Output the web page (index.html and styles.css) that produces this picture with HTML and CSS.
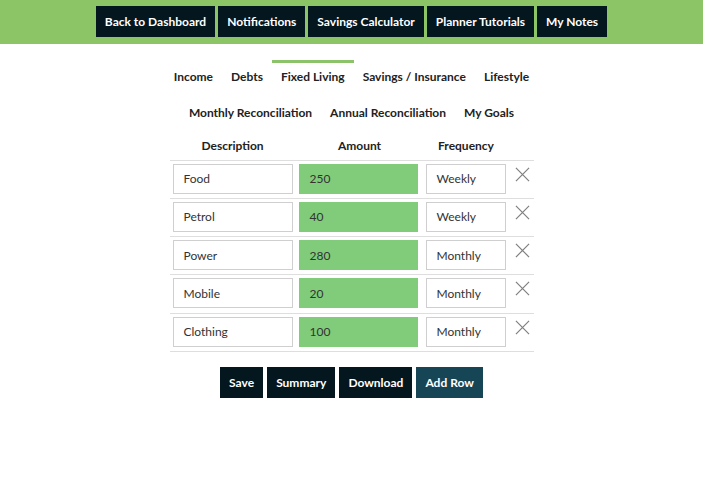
FILE: index.html
```html
<!DOCTYPE html>
<html>
<head>
<meta charset="utf-8">
<link rel="stylesheet" href="styles.css">
</head>
<body>
<header class="topbar">
  <nav class="topnav">
    <a class="btn">Back to Dashboard</a>
    <a class="btn">Notifications</a>
    <a class="btn">Savings Calculator</a>
    <a class="btn">Planner Tutorials</a>
    <a class="btn">My Notes</a>
  </nav>
</header>
<main class="content">
  <ul class="tabs">
    <li class="tab">Income</li>
    <li class="tab">Debts</li>
    <li class="tab active">Fixed Living</li>
    <li class="tab">Savings / Insurance</li>
    <li class="tab">Lifestyle</li>
  </ul>
  <ul class="tabs">
    <li class="tab">Monthly Reconciliation</li>
    <li class="tab">Annual Reconciliation</li>
    <li class="tab">My Goals</li>
  </ul>
  <table class="grid">
    <thead>
      <tr>
        <th class="c-desc">Description</th>
        <th class="c-amt">Amount</th>
        <th class="c-freq">Frequency</th>
        <th class="c-del"></th>
      </tr>
    </thead>
    <tbody>
      <tr>
        <td class="c-desc"><div class="field">Food</div></td>
        <td class="c-amt"><div class="field amount">250</div></td>
        <td class="c-freq"><div class="field">Weekly</div></td>
        <td class="c-del"><svg class="x" viewBox="0 0 16 16"><path d="M1 1L15 15M15 1L1 15"/></svg></td>
      </tr>
      <tr>
        <td class="c-desc"><div class="field">Petrol</div></td>
        <td class="c-amt"><div class="field amount">40</div></td>
        <td class="c-freq"><div class="field">Weekly</div></td>
        <td class="c-del"><svg class="x" viewBox="0 0 16 16"><path d="M1 1L15 15M15 1L1 15"/></svg></td>
      </tr>
      <tr>
        <td class="c-desc"><div class="field">Power</div></td>
        <td class="c-amt"><div class="field amount">280</div></td>
        <td class="c-freq"><div class="field">Monthly</div></td>
        <td class="c-del"><svg class="x" viewBox="0 0 16 16"><path d="M1 1L15 15M15 1L1 15"/></svg></td>
      </tr>
      <tr>
        <td class="c-desc"><div class="field">Mobile</div></td>
        <td class="c-amt"><div class="field amount">20</div></td>
        <td class="c-freq"><div class="field">Monthly</div></td>
        <td class="c-del"><svg class="x" viewBox="0 0 16 16"><path d="M1 1L15 15M15 1L1 15"/></svg></td>
      </tr>
      <tr>
        <td class="c-desc"><div class="field">Clothing</div></td>
        <td class="c-amt"><div class="field amount">100</div></td>
        <td class="c-freq"><div class="field">Monthly</div></td>
        <td class="c-del"><svg class="x" viewBox="0 0 16 16"><path d="M1 1L15 15M15 1L1 15"/></svg></td>
      </tr>
    </tbody>
  </table>
  <div class="actions">
    <a class="btn">Save</a>
    <a class="btn">Summary</a>
    <a class="btn">Download</a>
    <a class="btn teal">Add Row</a>
  </div>
</main>
</body>
</html>
```

FILE: styles.css
```css
* { box-sizing: border-box; }
body {
  margin: 0;
  font-family: Lato, "Open Sans", sans-serif;
  font-size: 12px;
  color: #222;
  background: #fff;
}
.topbar {
  background: #8cc566;
  height: 44px;
  padding-top: 6px;
}
.topnav {
  display: flex;
  justify-content: center;
  gap: 3px;
}
.btn {
  display: inline-flex;
  align-items: center;
  height: 31px;
  padding: 0 9px;
  background: #04161e;
  color: #fff;
  font-weight: 700;
  font-size: 12px;
  text-decoration: none;
}
.btn.teal { background: #164556; }
.content {
  display: flex;
  flex-direction: column;
  align-items: center;
  padding-top: 16px;
}
.tabs {
  list-style: none;
  margin: 0;
  padding: 0;
  display: flex;
  justify-content: center;
}
.tab {
  padding: 6px 9px 0;
  height: 36px;
  line-height: 15px;
  border-top: 3px solid transparent;
  font-weight: 700;
  color: #222;
}
.tab.active { border-top-color: #8cc26a; }
.grid {
  border-collapse: collapse;
  width: 364px;
}
.grid th {
  font-weight: 700;
  height: 28px;
  padding: 0;
  text-align: center;
  vertical-align: middle;
}
.grid td {
  border-top: 1px solid #dedede;
  padding: 3px 3px 4.25px;
  vertical-align: top;
}
.grid tbody tr:last-child td { border-bottom: 1px solid #dedede; }
.c-desc { width: 126px; }
.c-amt { width: 128px; }
.c-freq { width: 85px; }
.c-del { width: 25px; }
.grid td.c-amt { padding-left: 3px; padding-right: 6px; }
.grid td.c-freq { padding-left: 2px; padding-right: 3px; }
.field {
  height: 30px;
  border: 1px solid #cfcfcf;
  padding: 0 10px;
  display: flex;
  align-items: center;
  color: #333;
  background: #fff;
}
.field.amount {
  background: #80cc7a;
  border-color: #80cc7a;
}
.grid td.c-del { padding: 6px 0 0 6px; }
.x {
  width: 15px;
  height: 15px;
  display: block;
  stroke: #808080;
  stroke-width: 1.3;
  fill: none;
}
.actions {
  display: flex;
  gap: 4px;
  margin-top: 15px;
}
```
